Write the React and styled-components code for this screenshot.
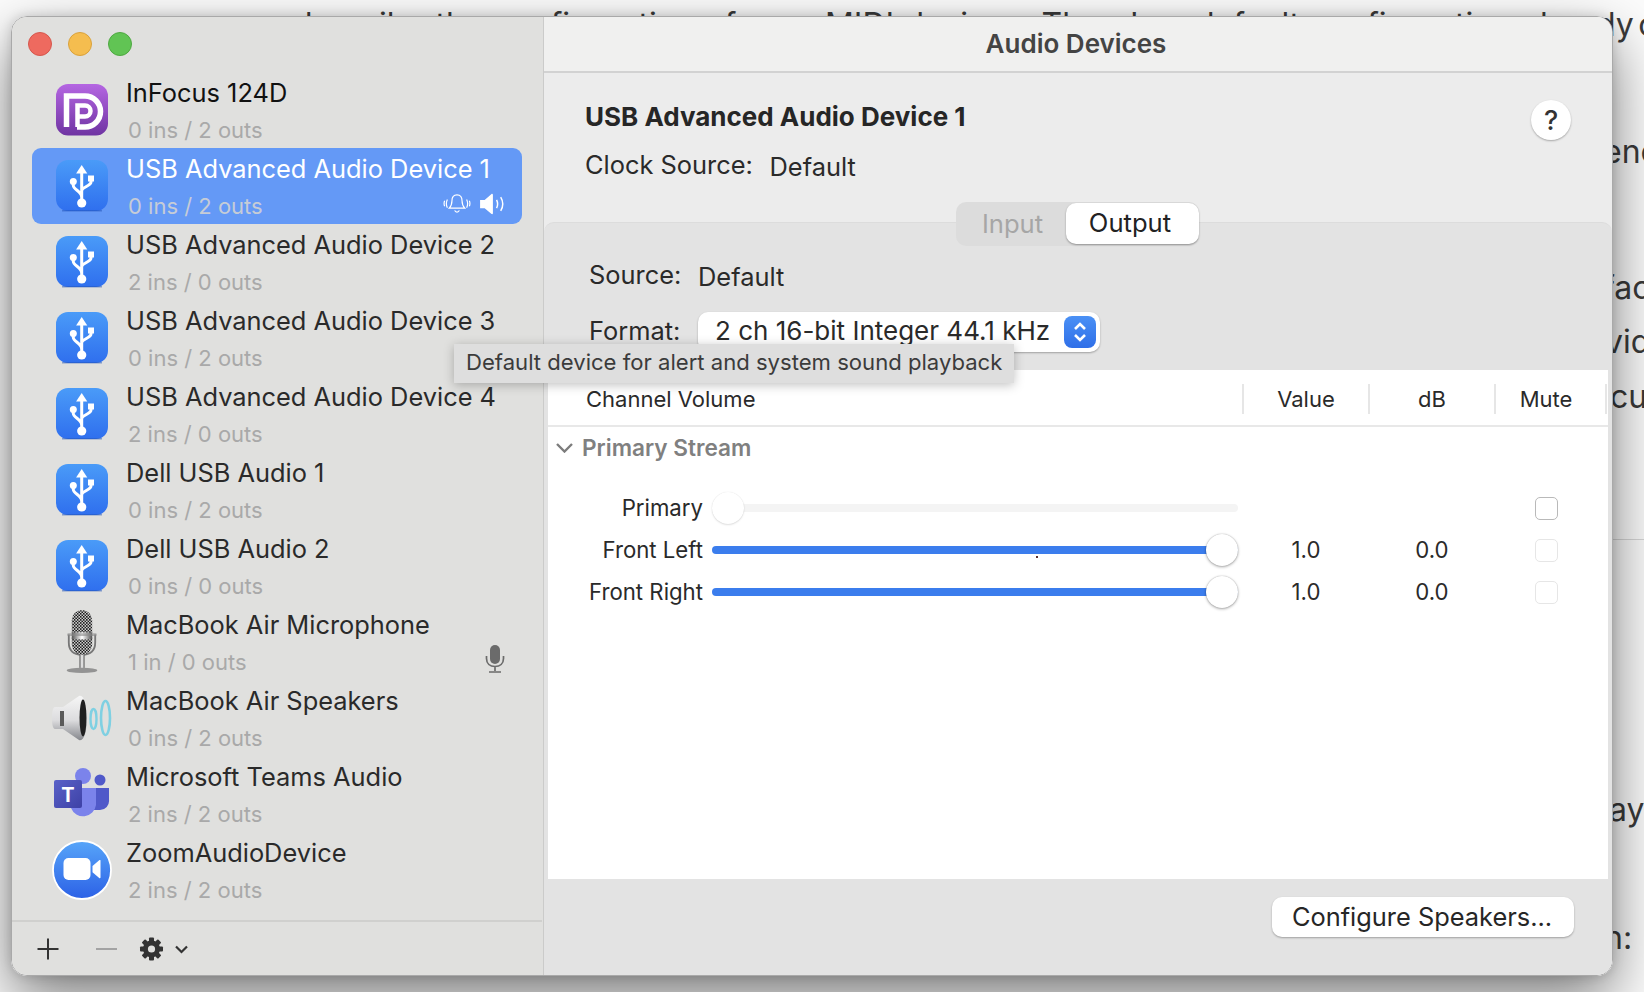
import styled, { createGlobalStyle } from "styled-components";

const GlobalStyle = createGlobalStyle`
  html, body {
    margin: 0;
    padding: 0;
    width: 1644px;
    height: 992px;
    overflow: hidden;
    background: #fcfcfc;
    font-family: Inter, "Liberation Sans", sans-serif;
    -webkit-font-smoothing: antialiased;
  }
  * { box-sizing: border-box; }
`;

const Desktop = styled.div`
  position: relative;
  width: 1644px;
  height: 992px;
  overflow: hidden;
`;

const Document = styled.div`
  color: #3a3a3a;
  font-size: 32px;
  line-height: 50px;
  white-space: nowrap;
`;

const DocFirstLine = styled.div`
  margin-left: 293px;
  word-spacing: 1.5px;
`;

const DocTail = styled.span`
  margin-left: -6px;
`;

const DocLine = styled.div`
  margin-top: ${(p) => p.$top}px;
  padding-left: ${(p) => p.$left}px;
`;

const DocRule = styled.div`
  margin: 117px 0 0 1612px;
  height: 1px;
  background: #d8d8d8;
`;

const Window = styled.div`
  position: absolute;
  left: 11px;
  top: 16px;
  width: 1602px;
  height: 960px;
  display: flex;
  border-radius: 16px;
  overflow: hidden;
  border: 1px solid #a9a9a9;
`;

const WindowShadow = styled.div`
  position: absolute;
  left: 11px;
  top: 16px;
  width: 1602px;
  height: 960px;
  border-radius: 16px;
  box-shadow: 0 24px 60px rgba(0, 0, 0, 0.5), 0 0 12px rgba(0, 0, 0, 0.16);
`;

const Sidebar = styled.aside`
  width: 532px;
  flex: none;
  display: flex;
  flex-direction: column;
  background: #e0e0de;
  border-right: 1px solid #cbcbca;
`;

const TrafficLights = styled.div`
  height: 55px;
  flex: none;
  display: flex;
  align-items: center;
  gap: 16px;
  padding: 0 0 2px 16px;
`;

const Light = styled.span`
  width: 24px;
  height: 24px;
  border-radius: 50%;
  background: ${(p) => p.$color};
  border: 1px solid ${(p) => p.$edge};
`;

const DeviceList = styled.div`
  flex: 1;
  padding: 0 21px 0 20px;
`;

const Row = styled.div`
  position: relative;
  height: 76px;
  display: flex;
  align-items: center;
  padding-left: 24px;
  border-radius: 9px;
  background: ${(p) => (p.$selected ? "#6499f6" : "transparent")};
`;

const IconSlot = styled.div`
  width: 52px;
  height: 52px;
  flex: none;
  display: flex;
  align-items: center;
  justify-content: center;

  svg {
    flex: none;
    display: block;
  }
`;

const RowText = styled.div`
  margin-left: 18px;
  height: 76px;
  flex: 1;
  display: flex;
  flex-direction: column;
`;

const DeviceName = styled.div`
  height: 42px;
  line-height: 42px;
  font-size: 25.4px;
  color: ${(p) => (p.$selected ? "#fff" : p.$dark ? "#111" : "#2a2a2a")};
`;

const DeviceIo = styled.div`
  margin: -4px 0 0 2px;
  line-height: 40px;
  font-size: 22px;
  color: ${(p) => (p.$selected ? "#c6ccd6" : "#a9a9a9")};
`;

const RowBadges = styled.div`
  position: absolute;
  right: 17px;
  bottom: ${(p) => p.$bottom}px;
  display: flex;
  align-items: center;
  gap: 8px;
`;

const SidebarFooter = styled.div`
  height: 55px;
  flex: none;
  display: flex;
  align-items: center;
  padding-left: 25px;
  border-top: 2px solid #d0d0ce;
  margin-right: 1px;
`;

const FooterGlyphs = styled.svg`
  display: block;
`;

const Main = styled.main`
  flex: 1;
  min-width: 0;
  display: flex;
  flex-direction: column;
  background: #ececec;
`;

const TitleBar = styled.header`
  height: 56px;
  flex: none;
  display: flex;
  align-items: center;
  justify-content: center;
  padding: 0 4px 2px 0;
  background: #f0f0ef;
  border-bottom: 2px solid #d2d2d2;
  font-size: 26px;
  font-weight: 600;
  color: #444;
`;

const DeviceHeader = styled.section`
  position: relative;
  height: 149px;
  flex: none;
  padding: 24px 0 0 41px;
  color: #2a2a2a;
`;

const DeviceTitle = styled.h1`
  margin: 0;
  height: 40px;
  line-height: 40px;
  font-size: 26px;
  font-weight: 700;
  color: #262626;
`;

const FieldRow = styled.div`
  display: flex;
  align-items: center;
  height: 40px;
  margin-top: ${(p) => p.$top || 0}px;
  font-size: 25.4px;
  color: #2a2a2a;
`;

const FieldLabel = styled.span`
  width: ${(p) => p.$width}px;
  flex: none;
  transform: translateY(-2px);
`;

const HelpButton = styled.div`
  position: absolute;
  right: 41px;
  top: 27px;
  width: 40px;
  height: 40px;
  border-radius: 50%;
  background: #fff;
  box-shadow: 0 1px 2px rgba(0, 0, 0, 0.3);
  display: flex;
  align-items: center;
  justify-content: center;
  font-size: 27px;
  font-weight: 500;
  color: #333;
`;

const TabPanel = styled.section`
  flex: 1;
  min-height: 0;
  display: flex;
  flex-direction: column;
  background: #e3e3e3;
  border-top: 1px solid #dcdcdc;
  border-radius: 10px 10px 0 0;
`;

const Segmented = styled.div`
  margin: -21px 0 0 412px;
  width: 243px;
  height: 44px;
  flex: none;
  display: flex;
  background: #dcdcdc;
  border-radius: 10px;
  font-size: 25.6px;
`;

const Segment = styled.div`
  width: ${(p) => p.$width}px;
  display: flex;
  align-items: center;
  justify-content: center;
  padding: ${(p) => (p.$active ? "0 5px 2px 0" : "0 0 2px 3px")};
  border-radius: 10px;
  margin-top: ${(p) => (p.$active ? 1 : 0)}px;
  height: ${(p) => (p.$active ? 41 : 44)}px;
  background: ${(p) => (p.$active ? "#fff" : "transparent")};
  color: ${(p) => (p.$active ? "#222" : "#a6a6a6")};
  box-shadow: ${(p) => (p.$active ? "0 1px 2px rgba(0,0,0,.35)" : "none")};
`;

const StreamFields = styled.div`
  padding: 10px 0 0 45px;
  display: flex;
  flex-direction: column;
  gap: 16px;
`;

const SelectBox = styled.div`
  width: 402px;
  height: 40px;
  display: flex;
  align-items: center;
  justify-content: space-between;
  padding: 0 4px 0 17px;
  background: #fff;
  border-radius: 10px;
  box-shadow: 0 1px 2px rgba(0, 0, 0, 0.3);
`;

const SelectText = styled.span`
  padding-bottom: 3px;
  font-size: 26px;
`;

const Stepper = styled.span`
  width: 32px;
  height: 32px;
  border-radius: 8px;
  background: linear-gradient(#4a90f5, #2f6fe8);
  display: flex;
  align-items: center;
  justify-content: center;
`;

const ChannelTable = styled.div`
  position: relative;
  margin: 18px 4px 0;
  flex: 1;
  min-height: 0;
  background: #fff;
  color: #2a2a2a;
`;

const TableHead = styled.div`
  height: 57px;
  display: grid;
  grid-template-columns: 694px 126px 126px 111px 1fr;
  align-items: center;
  border-bottom: 2px solid #e8e8e8;
  font-size: 22px;
  padding-top: 2px;
`;

const HeadCell = styled.div`
  height: 30px;
  line-height: 30px;
  padding-left: ${(p) => (p.$first ? 38 : 0)}px;
  padding-right: ${(p) => (p.$mute ? 9 : 0)}px;
  text-align: ${(p) => (p.$first ? "left" : "center")};
  border-left: ${(p) => (p.$first ? "none" : "2px solid #e6e6e6")};
`;

const StreamHeading = styled.div`
  height: 42px;
  display: flex;
  align-items: center;
  gap: 9px;
  padding: 0 0 2px 8px;
  font-size: 22.6px;
  font-weight: 600;
  color: #808080;
`;

const ChannelRows = styled.div`
  margin-top: 18px;
`;

const ChannelRow = styled.div`
  height: 42px;
  display: grid;
  grid-template-columns: 155px 540px 126px 126px 103px;
  align-items: center;
  font-size: 22.2px;
`;

const ChannelLabel = styled.div`
  padding-bottom: 2px;
  text-align: right;
`;

const ChannelValue = styled.div`
  padding-bottom: 2px;
  text-align: center;
`;

const Track = styled.div`
  position: relative;
  margin: 0 5px 0 9px;
  height: 8px;
  border-radius: 4px;
  background: ${(p) => (p.$filled ? "#3b7ded" : "#f4f4f4")};
`;

const Thumb = styled.div`
  position: absolute;
  top: -12px;
  width: 32px;
  height: 32px;
  border-radius: 50%;
  background: #fff;
  box-shadow: ${(p) =>
    p.$on
      ? "0 1px 3px rgba(0,0,0,.35), 0 0 1px rgba(0,0,0,.3)"
      : "0 1px 2px rgba(0,0,0,.12), 0 0 1px rgba(0,0,0,.12)"};
`;

const CheckBox = styled.div`
  justify-self: center;
  width: 23px;
  height: 23px;
  border-radius: 5px;
  background: #fff;
  border: 1px solid ${(p) => (p.$strong ? "#b9b9b9" : "#e6e6e6")};
`;

const Speck = styled.span`
  position: absolute;
  left: 488px;
  top: 186px;
  width: 2px;
  height: 2px;
  background: #5a3030;
`;

const PanelFooter = styled.div`
  height: 96px;
  flex: none;
  display: flex;
  justify-content: flex-end;
  padding: 18px 38px 0 0;
`;

const ConfigureButton = styled.div`
  width: 302px;
  height: 40px;
  display: flex;
  align-items: center;
  justify-content: center;
  padding: 0 2px 2px 0;
  background: #fff;
  border-radius: 10px;
  box-shadow: 0 1px 2px rgba(0, 0, 0, 0.3);
  font-size: 25.4px;
  color: #262626;
`;

const Tooltip = styled.div`
  position: absolute;
  left: 442px;
  top: 327px;
  width: 560px;
  height: 39px;
  display: flex;
  align-items: center;
  padding: 0 0 3px 12px;
  background: #dedede;
  box-shadow: 0 2px 10px rgba(0, 0, 0, 0.25);
  font-size: 22.1px;
  color: #3b3b3b;
  white-space: nowrap;
`;

const UsbIcon = () => (
  <svg width="52" height="52" viewBox="0 0 52 52">
    <defs>
      <linearGradient id="usbBg" x1="0" y1="0" x2="0" y2="1">
        <stop offset="0" stopColor="#4a9bf8" />
        <stop offset="1" stopColor="#2f6fee" />
      </linearGradient>
    </defs>
    <rect width="52" height="51" rx="12" fill="url(#usbBg)" />
    <rect y="50" x="6" width="40" height="1.5" fill="#2356b8" opacity="0.5" />
    <path d="M25.7 5l5.6 8.5h-11.2z" fill="#fff" />
    <path
      d="M25.7 12v31M17.3 22v3.5c0 4 8.4 6 8.4 11.5M35 20v2c0 4-9.3 5-9.3 9"
      fill="none"
      stroke="#fff"
      strokeWidth="3"
    />
    <circle cx="25.7" cy="43" r="4.6" fill="#fff" />
    <circle cx="17.3" cy="21.5" r="3.5" fill="#fff" />
    <rect x="32" y="15.5" width="6" height="6" fill="#fff" />
  </svg>
);

const PdIcon = () => (
  <svg width="52" height="52" viewBox="0 0 52 52">
    <defs>
      <linearGradient id="pdBg" x1="0" y1="0" x2="0" y2="1">
        <stop offset="0" stopColor="#b566e2" />
        <stop offset="1" stopColor="#6f34a2" />
      </linearGradient>
    </defs>
    <rect width="52" height="51.5" rx="12" fill="url(#pdBg)" />
    <path
      d="M10.500 43V12H29a15.500 15.500 0 0 1 0 31H21"
      fill="none"
      stroke="#fff"
      strokeWidth="5.500"
    />
    <path
      d="M21.500 43V21.500H29a5.500 5.500 0 0 1 0 11h-7.500"
      fill="none"
      stroke="#fff"
      strokeWidth="4.500"
    />
  </svg>
);

const MicIcon = () => (
  <svg width="32" height="64" viewBox="0 0 31 63">
    <defs>
      <pattern id="grille" width="3" height="3" patternUnits="userSpaceOnUse">
        <rect width="3" height="3" fill="#1c1c1c" />
        <rect width="1.500" height="1.500" fill="#cfcfcf" />
        <rect x="1.500" y="1.500" width="1.500" height="1.500" fill="#cfcfcf" />
      </pattern>
      <linearGradient id="micMetal" x1="0" y1="0" x2="1" y2="0">
        <stop offset="0" stopColor="#555" />
        <stop offset="0.5" stopColor="#fff" />
        <stop offset="1" stopColor="#555" />
      </linearGradient>
    </defs>
    <path
      d="M2.500 24v8c0 9 6 12 13 12s13-3 13-12v-8"
      fill="none"
      stroke="#777"
      strokeWidth="1.800"
    />
    <rect x="5.500" y="0" width="20" height="44" rx="10" fill="url(#grille)" />
    <rect x="5.500" y="22" width="20" height="7" fill="url(#micMetal)" />
    <rect x="1" y="23" width="29" height="2.500" rx="1" fill="#888" opacity="0.6" />
    <rect x="13" y="44" width="5" height="13" fill="url(#micMetal)" />
    <ellipse cx="15.500" cy="59.500" rx="15" ry="2.600" fill="#808080" opacity="0.8" />
  </svg>
);

const SpeakerIcon = () => (
  <svg width="60" height="48" viewBox="0 0 60 48">
    <defs>
      <linearGradient id="coneFill" x1="0" y1="0" x2="0" y2="1">
        <stop offset="0" stopColor="#f6f6f6" />
        <stop offset="0.55" stopColor="#dcdcde" />
        <stop offset="1" stopColor="#85878c" />
      </linearGradient>
    </defs>
    <path
      d="M3 13h8L27 2c5-2 8 9 8 22s-3 24-8 22L11 35H3c-2 0-3-4-3-11s1-11 3-11z"
      fill="url(#coneFill)"
    />
    <rect x="8" y="17" width="4" height="15" fill="#5a5a5a" />
    <ellipse cx="31" cy="24" rx="3.500" ry="18.500" fill="#1f1f1f" />
    <ellipse cx="41.500" cy="25" rx="3" ry="10" fill="none" stroke="#7fd0e2" strokeWidth="2.400" />
    <ellipse cx="53.500" cy="24" rx="4.500" ry="17" fill="none" stroke="#7fd0e2" strokeWidth="2.600" />
  </svg>
);

const TeamsIcon = () => (
  <svg width="56" height="52" viewBox="0 0 56 52">
    <defs>
      <linearGradient id="teamsTile" x1="0" y1="0" x2="1" y2="1">
        <stop offset="0" stopColor="#5a62c8" />
        <stop offset="1" stopColor="#3e41a6" />
      </linearGradient>
    </defs>
    <circle cx="46" cy="12" r="5.500" fill="#5059c9" />
    <path d="M39 20h16v12a9 9 0 0 1-9 10h-7z" fill="#5059c9" />
    <circle cx="29" cy="8" r="8" fill="#7b83eb" />
    <path d="M17 20h25v17a13 13 0 0 1-25 3z" fill="#7b83eb" />
    <rect x="0" y="12" width="28" height="28" rx="2" fill="url(#teamsTile)" />
    <text
      x="14"
      y="34"
      textAnchor="middle"
      fontFamily="Inter, sans-serif"
      fontSize="20"
      fontWeight="700"
      fill="#fff"
    >
      T
    </text>
  </svg>
);

const ZoomIcon = () => (
  <svg width="60" height="60" viewBox="0 0 60 60">
    <defs>
      <linearGradient id="zoomBg" x1="0" y1="0" x2="0" y2="1">
        <stop offset="0" stopColor="#57a5f9" />
        <stop offset="1" stopColor="#2c61e6" />
      </linearGradient>
    </defs>
    <circle cx="30" cy="30" r="29" fill="url(#zoomBg)" stroke="#fff" strokeWidth="1.800" />
    <rect x="11.500" y="18" width="27" height="22" rx="5" fill="#fff" />
    <path d="M40.500 26l7-6c.5-.3 1 0 1 .6v17c0 .6-.5.9-1 .6l-7-6z" fill="#fff" />
  </svg>
);

const BellBadge = () => (
  <svg width="28" height="22" viewBox="0 0 30 24" fill="none" stroke="#fff" strokeWidth="1.300">
    <path d="M15 2c-4 0-5.500 3-5.500 6.500 0 4-1 6-3 8h17c-2-2-3-4-3-8C20.500 5 19 2 15 2z" />
    <path d="M12.500 19a2.600 2.600 0 0 0 5 0" />
    <path d="M4.500 7c-1.500 3-1.500 6 0 9M1.500 8.500c-.8 2-.8 4 0 6M25.500 7c1.500 3 1.500 6 0 9M28.500 8.500c.8 2 .8 4 0 6" />
  </svg>
);

const VolumeBadge = () => (
  <svg width="26" height="22" viewBox="0 0 28 24">
    <path d="M1 7.500h5L13.500 1c.6-.4 1.500-.1 1.500.8v20.400c0 .9-.9 1.200-1.500.8L6 16.500H1z" fill="#fff" />
    <path d="M19 7.500c1.500 3 1.500 6 0 9M23.500 4.500c2.700 4.500 2.700 10.500 0 15" fill="none" stroke="#fff" strokeWidth="1.600" />
  </svg>
);

const MicBadge = () => (
  <svg width="20" height="28" viewBox="0 0 20 28" fill="none" stroke="#6b6b6b">
    <rect x="5" y="0" width="10" height="19" rx="5" fill="#6b6b6b" stroke="none" />
    <path d="M1.500 11v2.500c0 5 3.500 8 8.500 8s8.500-3 8.500-8V11M10 21.500V26M4 27h12" strokeWidth="1.700" />
  </svg>
);

const devices = [
  { name: "InFocus 124D", io: "0 ins / 2 outs", Icon: PdIcon, dark: true },
  { name: "USB Advanced Audio Device 1", io: "0 ins / 2 outs", Icon: UsbIcon, selected: true },
  { name: "USB Advanced Audio Device 2", io: "2 ins / 0 outs", Icon: UsbIcon },
  { name: "USB Advanced Audio Device 3", io: "0 ins / 2 outs", Icon: UsbIcon },
  { name: "USB Advanced Audio Device 4", io: "2 ins / 0 outs", Icon: UsbIcon },
  { name: "Dell USB Audio 1", io: "0 ins / 2 outs", Icon: UsbIcon },
  { name: "Dell USB Audio 2", io: "0 ins / 0 outs", Icon: UsbIcon },
  { name: "MacBook Air Microphone", io: "1 in / 0 outs", Icon: MicIcon, mic: true },
  { name: "MacBook Air Speakers", io: "0 ins / 2 outs", Icon: SpeakerIcon },
  { name: "Microsoft Teams Audio", io: "2 ins / 2 outs", Icon: TeamsIcon },
  { name: "ZoomAudioDevice", io: "2 ins / 2 outs", Icon: ZoomIcon },
];

const channels = [
  { label: "Primary", level: 0, strong: true },
  { label: "Front Left", level: 1, value: "1.0", db: "0.0" },
  { label: "Front Right", level: 1, value: "1.0", db: "0.0" },
];

const App = () => {
  return (
    <>
      <GlobalStyle />
      <Desktop>
        <Document>
          <DocFirstLine>
            describe the configuration of your MIDI devices. There's a default configuration already <DocTail>c</DocTail>
          </DocFirstLine>
          <DocLine $top={77} $left={1603}>enc</DocLine>
          <DocLine $top={86} $left={1603}>fac</DocLine>
          <DocLine $top={4} $left={1605}>vid</DocLine>
          <DocLine $top={5} $left={1610}>cu</DocLine>
          <DocRule />
          <DocLine $top={245} $left={1609}>ay</DocLine>
          <DocLine $top={78} $left={1604}>n:</DocLine>
        </Document>
        <WindowShadow />
        <Window>
          <Sidebar>
            <TrafficLights>
              <Light $color="#ee6a5f" $edge="#d5574d" />
              <Light $color="#f5bd4f" $edge="#d9a13c" />
              <Light $color="#61c454" $edge="#4fa842" />
            </TrafficLights>
            <DeviceList>
              {devices.map(({ name, io, Icon, selected, dark, mic }) => (
                <Row key={name} $selected={selected}>
                  <IconSlot>
                    <Icon />
                  </IconSlot>
                  <RowText>
                    <DeviceName $selected={selected} $dark={dark}>
                      {name}
                    </DeviceName>
                    <DeviceIo $selected={selected}>{io}</DeviceIo>
                  </RowText>
                  {selected && (
                    <RowBadges $bottom={9}>
                      <BellBadge />
                      <VolumeBadge />
                    </RowBadges>
                  )}
                  {mic && (
                    <RowBadges $bottom={7}>
                      <MicBadge />
                    </RowBadges>
                  )}
                </Row>
              ))}
            </DeviceList>
            <SidebarFooter>
              <FooterGlyphs width="170" height="26" viewBox="0 0 170 26">
                <path d="M0.500 13h21M11 2.500v21" stroke="#333" strokeWidth="2" fill="none" />
                <path d="M59 13h21" stroke="#a3a3a3" strokeWidth="2" fill="none" />
                <g transform="translate(114.500 13)" fill="#333">
                  <circle r="8.500" />
                  {[0, 45, 90, 135, 180, 225, 270, 315].map((deg) => (
                    <rect key={deg} x="-2.500" y="-11.500" width="5" height="5" rx="1" transform={`rotate(${deg})`} />
                  ))}
                  <circle r="3.600" fill="#e0e0de" />
                </g>
                <path d="M139 10.500l5.500 5.500 5.500-5.500" stroke="#333" strokeWidth="2.200" fill="none" />
              </FooterGlyphs>
            </SidebarFooter>
          </Sidebar>
          <Main>
            <TitleBar>Audio Devices</TitleBar>
            <DeviceHeader>
              <DeviceTitle>USB Advanced Audio Device 1</DeviceTitle>
              <FieldRow $top={9}>
                <FieldLabel $width={184.5}>Clock Source:</FieldLabel>
                <span>Default</span>
              </FieldRow>
              <HelpButton>?</HelpButton>
            </DeviceHeader>
            <TabPanel>
              <Segmented>
                <Segment $width={110}>Input</Segment>
                <Segment $width={133} $active>Output</Segment>
              </Segmented>
              <StreamFields>
                <FieldRow>
                  <FieldLabel $width={109}>Source:</FieldLabel>
                  <span>Default</span>
                </FieldRow>
                <FieldRow>
                  <FieldLabel $width={109}>Format:</FieldLabel>
                  <SelectBox>
                    <SelectText>2 ch 16-bit Integer 44.1 kHz</SelectText>
                    <Stepper>
                      <svg width="16" height="24" viewBox="0 0 16 24" fill="none" stroke="#fff" strokeWidth="2.600">
                        <path d="M3 9l5-5 5 5M3 15l5 5 5-5" />
                      </svg>
                    </Stepper>
                  </SelectBox>
                </FieldRow>
              </StreamFields>
              <ChannelTable>
                <TableHead>
                  <HeadCell $first>Channel Volume</HeadCell>
                  <HeadCell>Value</HeadCell>
                  <HeadCell>dB</HeadCell>
                  <HeadCell $mute>Mute</HeadCell>
                  <HeadCell />
                </TableHead>
                <StreamHeading>
                  <svg width="17" height="11" viewBox="0 0 17 11" fill="none" stroke="#7c7c7c" strokeWidth="2.400">
                    <path d="M1 2l7.500 7.500L16 2" />
                  </svg>
                  Primary Stream
                </StreamHeading>
                <ChannelRows>
                  {channels.map(({ label, level, value, db, strong }) => (
                    <ChannelRow key={label}>
                      <ChannelLabel>{label}</ChannelLabel>
                      <Track $filled={level > 0}>
                        <Thumb $on={level > 0} style={{ left: `calc(${level} * (100% - 32px))` }} />
                      </Track>
                      <ChannelValue>{value}</ChannelValue>
                      <ChannelValue>{db}</ChannelValue>
                      <CheckBox $strong={strong} />
                    </ChannelRow>
                  ))}
                </ChannelRows>
                <Speck />
              </ChannelTable>
              <PanelFooter>
                <ConfigureButton>Configure Speakers...</ConfigureButton>
              </PanelFooter>
            </TabPanel>
          </Main>
          <Tooltip>Default device for alert and system sound playback</Tooltip>
        </Window>
      </Desktop>
    </>
  );
};

export default App;
